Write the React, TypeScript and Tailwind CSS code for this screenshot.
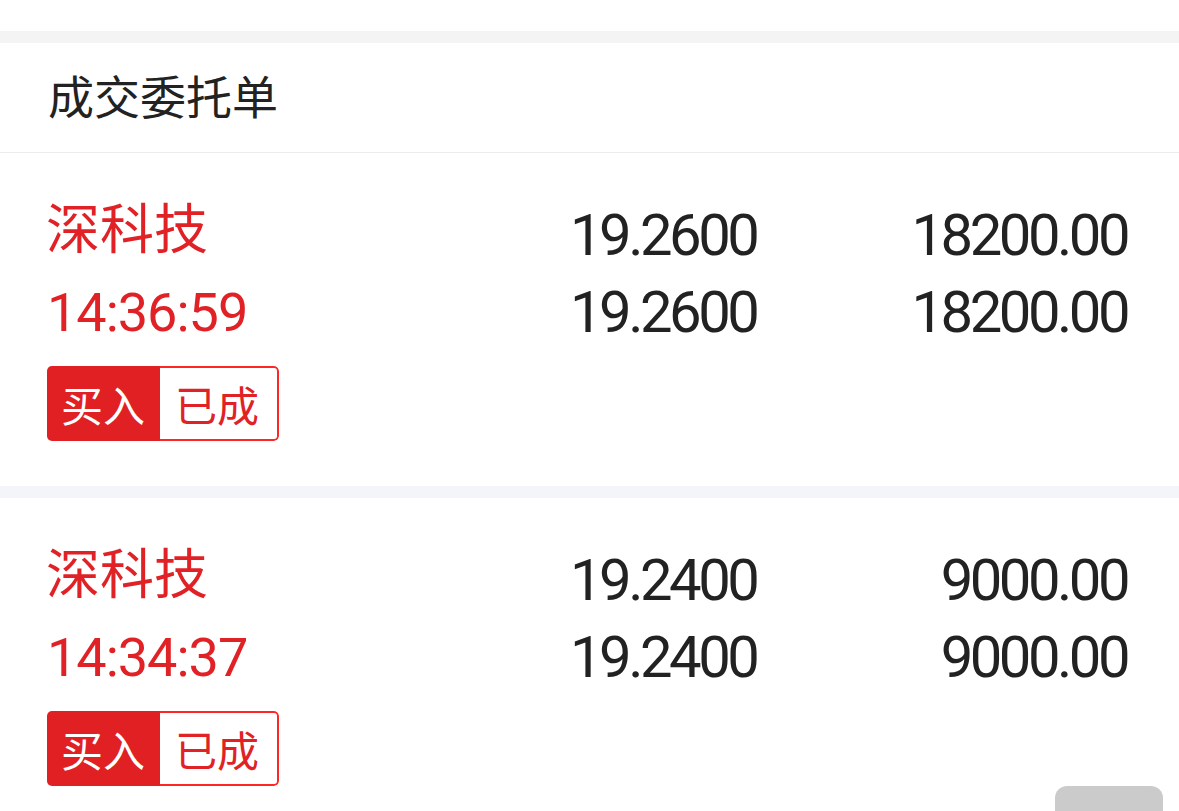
const orders = [
  { name: "深科技", time: "14:36:59", price: "19.2600", amount: "18200.00" },
  { name: "深科技", time: "14:34:37", price: "19.2400", amount: "9000.00" },
];

const cjk = { fontFamily: '"Noto Sans CJK SC", "Noto Sans", sans-serif' };
const num = { fontFamily: 'Roboto, "Noto Sans", sans-serif' };

function OrderCard({ order }: { order: (typeof orders)[number] }) {
  return (
    <div className="bg-white flex pl-[47px] pr-[49px] pt-[43px] pb-[45px]">
      <div className="w-[523px] flex flex-col items-start">
        <div className="-ml-[1px] text-[54px] leading-[60px] text-[#e02226]" style={cjk}>
          {order.name}
        </div>
        <div className="mt-[27px] text-[54px] leading-[60px] tracking-[-1px] text-[#e02226]" style={num}>
          {order.time}
        </div>
        <div className="mt-[23px] flex h-[75px] rounded-[5px] overflow-hidden text-[42px] leading-none" style={cjk}>
          <span className="bg-[#e02022] text-white pl-[14px] pr-[15px] flex items-center">买入</span>
          <span className="border-2 border-l-0 border-[#ff2626] rounded-r-[5px] text-[#e02226] pl-[15px] pr-[18px] flex items-center">
            已成
          </span>
        </div>
      </div>
      <div className="flex-1 flex pt-[1px] text-[58px] leading-[77px] tracking-[-3.5px] text-[#222]" style={num}>
        <div className="flex flex-col">
          <span>{order.price}</span>
          <span>{order.price}</span>
        </div>
        <div className="flex-1 flex flex-col items-end pr-[3px]">
          <span>{order.amount}</span>
          <span>{order.amount}</span>
        </div>
      </div>
    </div>
  );
}

export default function App() {
  return (
    <div className="relative w-[1179px] h-[811px] overflow-hidden bg-white">
      <div className="h-[31px] bg-white" />
      <div className="h-[12px] bg-[#f4f4f4]" />
      <div className="h-[110px] flex items-center px-[48px] pb-[7px] border-b border-[#ececec] text-[46px] text-[#222]" style={cjk}>
        成交委托单
      </div>
      <OrderCard order={orders[0]} />
      <div className="h-[12px] bg-[#f4f5f8]" />
      <OrderCard order={orders[1]} />
      <div className="absolute left-[1055px] top-[786px] w-[108px] h-[40px] rounded-[12px] bg-[#cbcbcb]" />
    </div>
  );
}
